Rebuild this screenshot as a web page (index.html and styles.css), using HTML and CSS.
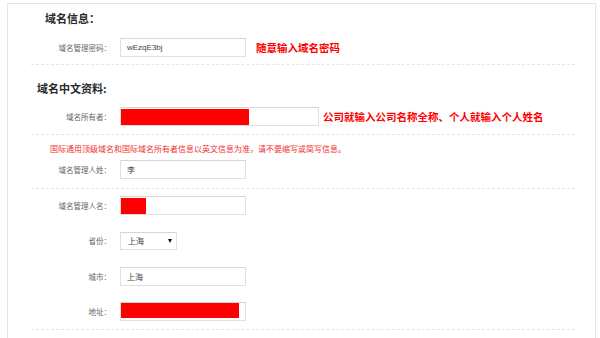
FILE: index.html
```html
<!DOCTYPE html>
<html lang="zh-CN">
<head>
	<meta charset="utf-8" />
	<title>域名信息</title>
	<link rel="stylesheet" href="styles.css">
</head>
<body>
	<div class="panel">
		<h3 class="title title-first">域名信息：</h3>
		<div class="row row-pwd">
			<span class="label">域名管理密码：</span>
			<div class="field">wEzqE3bj</div>
			<span class="tip tip-pwd">随意输入域名密码</span>
		</div>
		<div class="sep sep-1"></div>

		<h3 class="title title-second">域名中文资料:</h3>
		<div class="row row-owner">
			<span class="label">域名所有者：</span>
			<div class="field wide"><span class="redact" style="width: 128px"></span></div>
			<span class="tip tip-owner">公司就输入公司名称全称、个人就输入个人姓名</span>
		</div>
		<div class="sep sep-2"></div>

		<p class="note">国际通用顶级域名和国际域名所有者信息以英文信息为准，请不要缩写或简写信息。</p>
		<div class="row row-last">
			<span class="label">域名管理人姓：</span>
			<div class="field">李</div>
		</div>
		<div class="sep sep-3"></div>

		<div class="row row-first">
			<span class="label">域名管理人名：</span>
			<div class="field"><span class="redact" style="width: 25px"></span></div>
		</div>
		<div class="row row-prov">
			<span class="label">省份：</span>
			<div class="field select">上海<span class="arrow"></span></div>
		</div>
		<div class="row row-city">
			<span class="label">城市：</span>
			<div class="field">上海</div>
		</div>
		<div class="row row-addr">
			<span class="label">地址：</span>
			<div class="field"><span class="redact addr" style="width: 120px"></span></div>
		</div>
		<div class="sep sep-4"></div>
	</div>
</body>
</html>
```

FILE: styles.css
```css
html, body {
	margin: 0;
	background: #fff;
}

body {
	font-family: "Liberation Sans", "Noto Sans CJK SC", sans-serif;
	color: #333;
}

.panel {
	margin: 3px 0 0 7px;
	width: 587px;
	height: 334px;
	border: 1px solid #e4e4e4;
	border-bottom: none;
	overflow: hidden;
}

.title {
	margin: 0;
	font-size: 11px;
	line-height: 14px;
	font-weight: bold;
	color: #2a2a2a;
	font-family: "Noto Sans CJK SC", sans-serif;
}

.title-first {
	margin-top: 7px;
	padding-left: 37px;
}

.title-second {
	margin-top: 16px;
	padding-left: 29px;
}

.row {
	display: flex;
	align-items: center;
	height: 19px;
}

.label {
	width: 103px;
	margin-right: 9px;
	text-align: right;
	font-size: 7.5px;
	color: #666;
	font-family: "Noto Sans CJK SC", sans-serif;
}

.field {
	box-sizing: border-box;
	display: flex;
	align-items: center;
	width: 126px;
	height: 19px;
	padding: 0 6px;
	border: 1px solid #e0e0e0;
	border-top-color: #d6d6d6;
	font-size: 8px;
	color: #444;
}

.field.wide {
	width: 199px;
}

.field .redact {
	display: block;
	height: 16px;
	margin-left: -6px;
	background: #ff0000;
}

.field .redact.addr {
	height: 15px;
	margin-top: -2px;
}

.field.select {
	position: relative;
	width: 57px;
	height: 18px;
	padding-left: 7px;
}

.select .arrow {
	position: absolute;
	right: 4px;
	top: 6px;
	border-left: 2.5px solid transparent;
	border-right: 2.5px solid transparent;
	border-top: 4px solid #111;
}

.tip {
	font-size: 10.5px;
	font-weight: bold;
	color: #ff0000;
	font-family: "Noto Sans CJK SC", sans-serif;
}

.tip-pwd {
	margin-left: 10px;
}

.tip-owner {
	margin-left: 4px;
}

.sep {
	margin-left: 23px;
	width: 544px;
	border-top: 1px dashed #e6e6e6;
}

.row-pwd { margin-top: 13px; }
.sep-1 { margin-top: 7px; }
.row-owner { margin-top: 12px; }
.sep-2 { margin-top: 8px; }

.note {
	margin: 8px 0 0 42px;
	font-size: 8px;
	line-height: 12px;
	color: #f03030;
	font-family: "Noto Sans CJK SC", sans-serif;
}

.row-last { margin-top: 5px; }
.sep-3 { margin-top: 9px; }
.row-first { margin-top: 7px; }
.row-prov { margin-top: 16px; }
.row-city { margin-top: 17px; }
.row-addr { margin-top: 16px; }
.sep-4 { margin-top: 8px; }
```
